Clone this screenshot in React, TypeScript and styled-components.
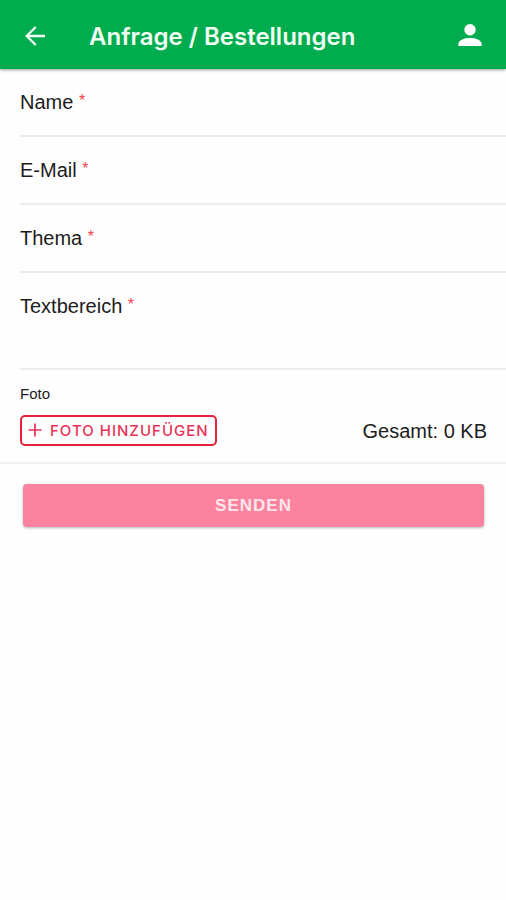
import React from "react";
import styled, { createGlobalStyle } from "styled-components";

const GlobalStyle = createGlobalStyle`
  *, *::before, *::after { box-sizing: border-box; }
  body {
    margin: 0;
    background: #fefefe;
    color: #1c1c1c;
    font-family: "Liberation Sans", Arial, Helvetica, sans-serif;
  }
`;

const Toolbar = styled.header`
  display: flex;
  align-items: center;
  height: 69px;
  padding: 2px 20px 0 19px;
  background: #00ac4e;
  color: #fff;
  box-shadow: 0 1px 3px rgba(0, 0, 0, 0.4);
`;

const IconButton = styled.button`
  display: flex;
  align-items: center;
  justify-content: center;
  width: 32px;
  height: 40px;
  padding: 0;
  border: 0;
  background: none;
  color: inherit;
  cursor: pointer;
`;

const Title = styled.h1`
  flex: 1;
  margin: 0 0 0 38px;
  padding-top: 2px;
  font-family: Inter, "Liberation Sans", sans-serif;
  font-size: 24px;
  line-height: 32px;
  font-weight: 600;
  color: #f2fff4;
`;

const Field = styled.div<{ $tall?: boolean }>`
  display: flex;
  align-items: flex-start;
  gap: 8px;
  min-height: ${(p) => (p.$tall ? 97 : 68)}px;
  margin-left: 20px;
  padding: 21px 20px 0 0;
  border-bottom: 2px solid #ececec;
`;

const Label = styled.label`
  font-size: 20px;
  line-height: 24px;
`;

const Required = styled.span`
  color: #f4424e;
  font-size: 16px;
  line-height: 16px;
  vertical-align: 3px;
`;

const controlStyle = `
  flex: 1;
  min-width: 0;
  padding: 0;
  border: 0;
  outline: none;
  background: transparent;
  color: inherit;
  font: inherit;
  font-size: 20px;
  line-height: 24px;
`;

const TextInput = styled.input`
  ${controlStyle}
`;

const TextArea = styled.textarea`
  ${controlStyle}
  height: 64px;
  resize: none;
`;

const PhotoSection = styled.section`
  padding: 15px 19px 16px 20px;
  border-bottom: 2px solid #f2f2f2;
`;

const Caption = styled.h2`
  margin: 0 0 12px;
  font-size: 15px;
  line-height: 18px;
  font-weight: 400;
`;

const PhotoRow = styled.div`
  display: flex;
  align-items: center;
  justify-content: space-between;
`;

const AddButton = styled.button`
  display: flex;
  align-items: center;
  gap: 8px;
  height: 31px;
  padding: 0 6px 1px;
  border: 2px solid #e2223f;
  border-radius: 5px;
  background: none;
  color: #e83357;
  font-family: Inter, "Liberation Sans", sans-serif;
  font-size: 15px;
  font-weight: 500;
  letter-spacing: 1px;
  cursor: pointer;
`;

const Total = styled.output`
  font-size: 20px;
  line-height: 24px;
`;

const Actions = styled.div`
  display: flex;
  padding: 20px 22px 20px 23px;
`;

const SendButton = styled.button`
  flex: 1;
  height: 43px;
  padding: 0;
  border: 0;
  border-radius: 4px;
  background: #fc839f;
  color: #ffe6ec;
  box-shadow: 0 1px 3px rgba(0, 0, 0, 0.28);
  font: inherit;
  font-size: 17px;
  font-weight: 700;
  letter-spacing: 1px;
`;

const BackIcon = () => (
  <svg width="20" height="20" viewBox="0 0 20 20" fill="none" stroke="#eefff2" strokeWidth="2.3" aria-hidden="true">
    <path d="M10.7 1 1.7 10l9 9M2 10h18" />
  </svg>
);

const PersonIcon = () => (
  <svg width="24" height="24" viewBox="0 0 24 24" fill="currentColor" aria-hidden="true">
    <circle cx="12" cy="5.7" r="5.7" />
    <path d="M0.3 22v-1.6c0-4.6 6.6-6.4 11.7-6.4s11.7 1.8 11.7 6.4v1.6z" />
  </svg>
);

const PlusIcon = () => (
  <svg width="14" height="14" viewBox="0 0 14 14" fill="none" stroke="currentColor" strokeWidth="1.7" aria-hidden="true">
    <path d="M7 0.5v13M0.5 7h13" />
  </svg>
);

const fields = [
  { id: "name", label: "Name", type: "text" },
  { id: "email", label: "E-Mail", type: "email" },
  { id: "topic", label: "Thema", type: "text" },
];

export default function App() {
  return (
    <>
      <GlobalStyle />
      <Toolbar>
        <IconButton type="button" aria-label="Zurück">
          <BackIcon />
        </IconButton>
        <Title>Anfrage / Bestellungen</Title>
        <IconButton type="button" aria-label="Profil">
          <PersonIcon />
        </IconButton>
      </Toolbar>
      <form>
        {fields.map((field) => (
          <Field key={field.id}>
            <Label htmlFor={field.id}>
              {field.label} <Required>*</Required>
            </Label>
            <TextInput id={field.id} type={field.type} required />
          </Field>
        ))}
        <Field $tall>
          <Label htmlFor="message">
            Textbereich <Required>*</Required>
          </Label>
          <TextArea id="message" required />
        </Field>
        <PhotoSection>
          <Caption>Foto</Caption>
          <PhotoRow>
            <AddButton type="button">
              <PlusIcon />
              FOTO HINZUFÜGEN
            </AddButton>
            <Total>Gesamt: 0 KB</Total>
          </PhotoRow>
        </PhotoSection>
        <Actions>
          <SendButton type="submit" disabled>
            SENDEN
          </SendButton>
        </Actions>
      </form>
    </>
  );
}
